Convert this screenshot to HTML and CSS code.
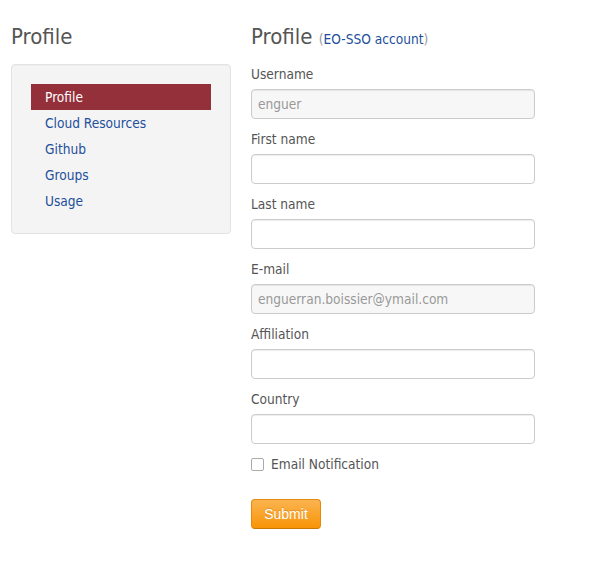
FILE: index.html
```html
<!DOCTYPE html>
<html>
<head>
<meta charset="utf-8">
<link rel="stylesheet" href="styles.css">
</head>
<body>
<div class="page">
  <aside class="sidebar">
    <h2 class="title">Profile</h2>
    <div class="well">
      <ul class="nav">
        <li class="active"><a href="#">Profile</a></li>
        <li><a href="#">Cloud Resources</a></li>
        <li><a href="#">Github</a></li>
        <li><a href="#">Groups</a></li>
        <li><a href="#">Usage</a></li>
      </ul>
    </div>
  </aside>
  <main class="content">
    <h2 class="title title-main">Profile <small class="sub">(<a href="#">EO-SSO account</a>)</small></h2>
    <form class="form">
      <div class="group">
        <label class="lbl">Username</label>
        <input class="field" type="text" value="enguer" disabled>
      </div>
      <div class="group">
        <label class="lbl">First name</label>
        <input class="field" type="text">
      </div>
      <div class="group">
        <label class="lbl">Last name</label>
        <input class="field" type="text">
      </div>
      <div class="group">
        <label class="lbl">E-mail</label>
        <input class="field" type="text" value="enguerran.boissier@ymail.com" disabled>
      </div>
      <div class="group">
        <label class="lbl">Affiliation</label>
        <input class="field" type="text">
      </div>
      <div class="group">
        <label class="lbl">Country</label>
        <input class="field" type="text">
      </div>
      <label class="check"><span class="box"></span>Email Notification</label>
      <button class="btn" type="button">Submit</button>
    </form>
  </main>
</div>
</body>
</html>
```

FILE: styles.css
```css
* { box-sizing: border-box; }
body {
  margin: 0;
  background: #fff;
  font-family: "DejaVu Sans Condensed", "Liberation Sans", sans-serif;
  font-size: 13.6px;
  color: #555;
}
.page {
  display: flex;
  gap: 20px;
  padding: 17px 0 0 11px;
}
.sidebar { width: 220px; flex: none; }
.content { width: 284px; flex: none; }
.title {
  margin: 0 0 7px;
  font-size: 22px;
  line-height: 40px;
  font-weight: normal;
  color: #555;
  white-space: nowrap;
}
.title-main { margin-bottom: 5px; }
.sub { font-size: 13.6px; color: #999; }
a { color: #1d4f9b; text-decoration: none; }
.well {
  background: #f4f4f4;
  border: 1px solid #e3e3e3;
  border-radius: 4px;
  padding: 19px;
  box-shadow: inset 0 1px 1px rgba(0,0,0,0.03);
}
.nav { list-style: none; margin: 0; padding: 0; }
.nav li a {
  display: block;
  height: 26px;
  line-height: 27px;
  padding: 0 14px;
}
.nav li.active a { background: #94303a; color: #fff; }
.form { display: flex; flex-direction: column; }
.group { display: flex; flex-direction: column; margin-bottom: 10px; }
.lbl { line-height: 20px; margin-bottom: 5px; }
.field {
  width: 284px;
  height: 30px;
  border: 1px solid #ccc;
  border-radius: 4px;
  padding: 4px 6px;
  font: inherit;
  color: #555;
  background: #fff;
  box-shadow: inset 0 1px 1px rgba(0,0,0,0.075);
}
.field:disabled { background: #f7f7f7; color: #999; }
.check {
  display: flex;
  align-items: center;
  height: 20px;
  margin-bottom: 25px;
}
.box {
  width: 13px;
  height: 13px;
  border: 1px solid #aaa;
  border-radius: 2px;
  background: #fff;
  margin: 0 7px 0 0;
}
.btn {
  align-self: flex-start;
  width: 70px;
  height: 30px;
  font: inherit;
  font-family: "Liberation Sans", sans-serif;
  font-size: 14px;
  color: #fff;
  background: linear-gradient(#fbb450, #f89406);
  border: 1px solid #e4890a;
  border-bottom-color: #c97704;
  border-radius: 4px;
  text-shadow: 0 -1px 0 rgba(0,0,0,0.15);
  padding: 0;
}
```
